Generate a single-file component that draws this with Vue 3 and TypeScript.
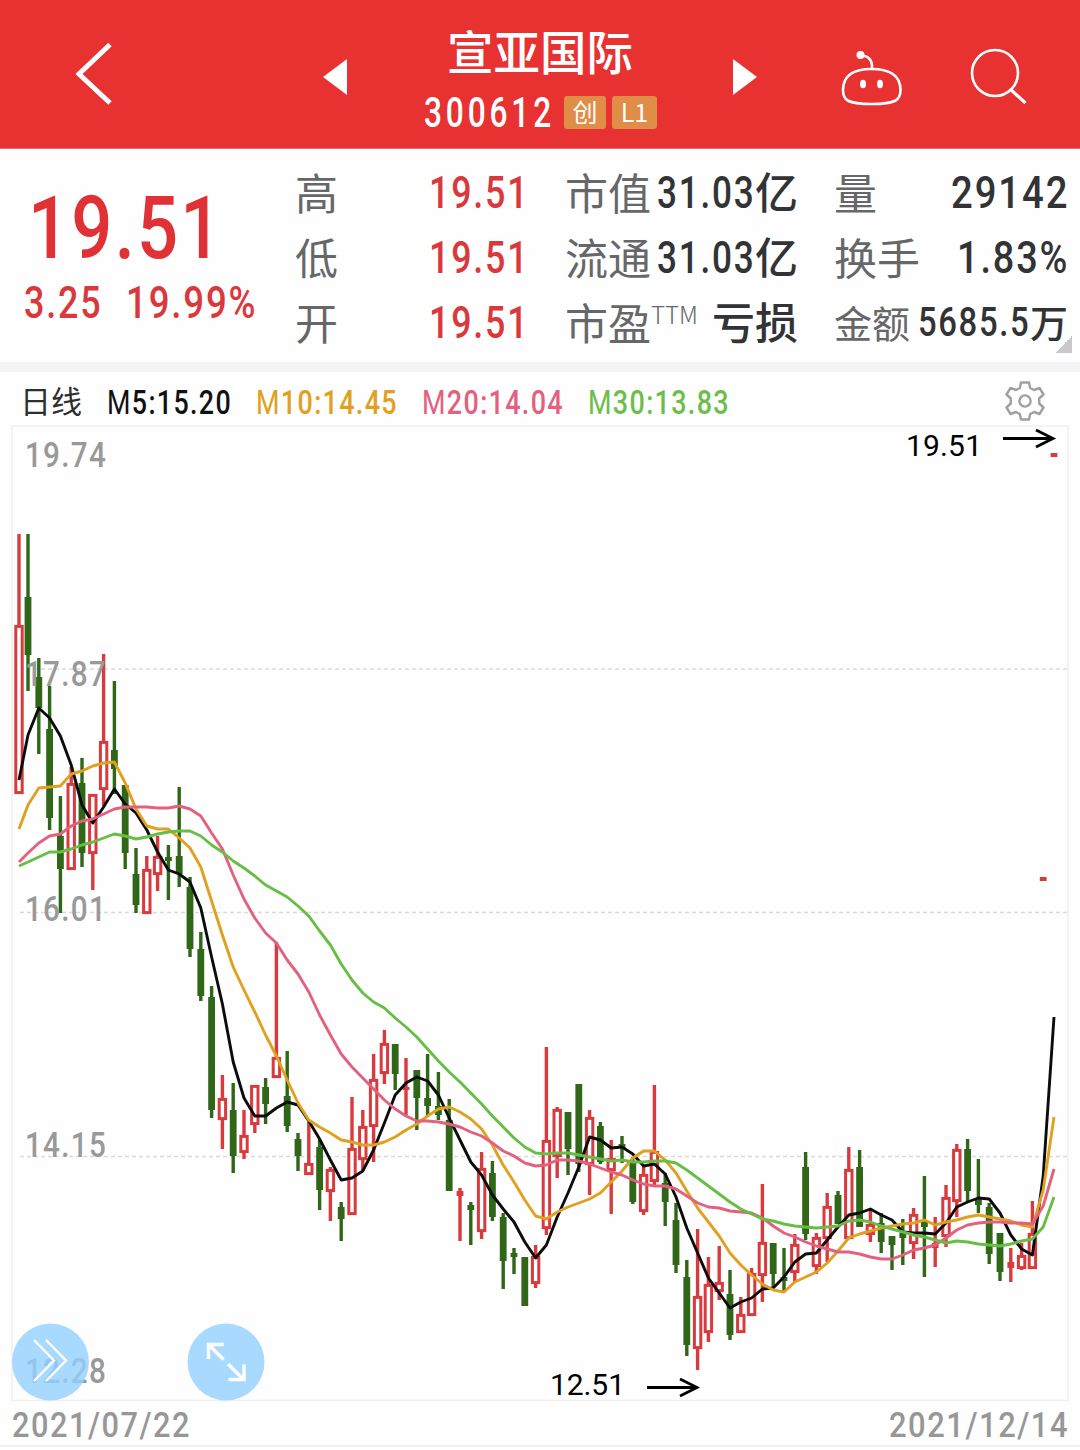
<script setup lang="ts">
import { h } from 'vue'

interface FitProps {
  text: string
  width: number
  size: number
  light?: string
  spacing?: number
}

/* Condensed numerals: the text is set to an exact width, the box is as tall as its capitals. */
const FitText = (props: FitProps) => {
  const height = Math.round(props.size * 0.711)
  const spacing = props.size * (props.spacing ?? 0.05)
  return h('svg', { class: 'fit', width: props.width, height, overflow: 'visible' }, [
    h(
      'text',
      {
        x: 0,
        y: height,
        fill: 'currentColor',
        'font-size': props.size,
        'letter-spacing': spacing,
        textLength: props.width + spacing * 0.6,
        lengthAdjust: 'spacingAndGlyphs',
      },
      [props.light ? h('tspan', { 'font-weight': 400 }, props.light) : null, props.text],
    ),
  ])
}
FitText.props = ['text', 'width', 'size', 'light', 'spacing']

const legend = [
  { light: 'M', text: '5:15.20', color: '#111113', width: 124 },
  { light: 'M', text: '10:14.45', color: '#e0a020', width: 141 },
  { light: 'M', text: '20:14.04', color: '#e4607e', width: 141 },
  { light: 'M', text: '30:13.83', color: '#6dbd4b', width: 141 },
]

const axis = [
  { text: '19.74', y: 467 },
  { text: '17.87', y: 685.5 },
  { text: '16.01', y: 920.5 },
  { text: '14.15', y: 1157 },
  { text: '12.28', y: 1383 },
]

type Candle = [kind: 'r' | 'g', high: number, top: number, bottom: number, low: number]

const candles: Candle[] = [
  ['r', 534, 625, 794, 794], ['g', 534, 597, 655, 691], ['g', 658, 677, 708, 754], ['g', 686, 729, 818, 830],
  ['g', 796, 836, 869, 913], ['r', 767, 783, 870, 870], ['g', 758, 783, 853, 867], ['r', 794, 794, 854, 890],
  ['r', 654, 741, 790, 806], ['g', 681, 750, 769, 794], ['g', 785, 785, 853, 869], ['g', 848, 874, 905, 913],
  ['r', 856, 869, 914, 914], ['r', 836, 856, 875, 891], ['g', 845, 857, 861, 900], ['g', 787, 856, 874, 887],
  ['g', 877, 887, 949, 957], ['g', 932, 949, 996, 1001], ['g', 986, 997, 1110, 1118], ['r', 1075, 1098, 1120, 1149],
  ['g', 1083, 1110, 1156, 1173], ['r', 1110, 1135, 1153, 1159], ['r', 1085, 1085, 1125, 1133], ['g', 1078, 1087, 1104, 1124],
  ['r', 942, 1057, 1078, 1078], ['g', 1051, 1096, 1126, 1132], ['g', 1133, 1139, 1156, 1171], ['r', 1122, 1163, 1175, 1175],
  ['g', 1140, 1147, 1190, 1210], ['r', 1167, 1169, 1192, 1221], ['g', 1202, 1207, 1219, 1241], ['r', 1097, 1148, 1215, 1215],
  ['r', 1110, 1126, 1160, 1170], ['r', 1054, 1079, 1127, 1162], ['r', 1030, 1043, 1074, 1084], ['g', 1044, 1044, 1074, 1090],
  ['r', 1058, 1087, 1090, 1115], ['g', 1070, 1070, 1098, 1130], ['g', 1054, 1098, 1106, 1116], ['g', 1072, 1106, 1115, 1120],
  ['g', 1099, 1120, 1191, 1191], ['r', 1188, 1191, 1196, 1241], ['g', 1202, 1205, 1210, 1245], ['r', 1152, 1168, 1232, 1239],
  ['g', 1161, 1173, 1217, 1221], ['g', 1213, 1217, 1261, 1289], ['g', 1248, 1253, 1257, 1274], ['g', 1257, 1257, 1306, 1306],
  ['r', 1245, 1256, 1284, 1288], ['r', 1047, 1140, 1229, 1235], ['r', 1107, 1109, 1157, 1178], ['g', 1112, 1112, 1149, 1175],
  ['g', 1084, 1084, 1164, 1172], ['r', 1110, 1117, 1165, 1195], ['g', 1122, 1126, 1162, 1164], ['r', 1140, 1158, 1171, 1214],
  ['g', 1136, 1144, 1148, 1163], ['g', 1157, 1162, 1202, 1204], ['r', 1167, 1174, 1212, 1215], ['r', 1085, 1151, 1182, 1185],
  ['g', 1173, 1183, 1202, 1226], ['g', 1203, 1220, 1265, 1273], ['g', 1260, 1277, 1345, 1356], ['r', 1229, 1296, 1349, 1370],
  ['r', 1257, 1284, 1333, 1342], ['r', 1246, 1282, 1292, 1300], ['g', 1270, 1294, 1335, 1340], ['r', 1297, 1314, 1333, 1333],
  ['r', 1268, 1273, 1316, 1316], ['r', 1184, 1242, 1276, 1302], ['g', 1243, 1243, 1274, 1287], ['g', 1248, 1277, 1281, 1292],
  ['r', 1234, 1244, 1273, 1282], ['g', 1152, 1167, 1234, 1240], ['r', 1233, 1237, 1267, 1274], ['r', 1193, 1206, 1239, 1262],
  ['g', 1191, 1195, 1224, 1224], ['r', 1147, 1169, 1239, 1239], ['g', 1150, 1167, 1227, 1227], ['r', 1211, 1224, 1235, 1242],
  ['g', 1213, 1223, 1242, 1253], ['g', 1236, 1236, 1245, 1270], ['g', 1219, 1233, 1238, 1265], ['r', 1208, 1214, 1244, 1259],
  ['g', 1176, 1222, 1227, 1277], ['r', 1217, 1243, 1248, 1267], ['r', 1185, 1197, 1237, 1247], ['r', 1144, 1149, 1202, 1217],
  ['g', 1139, 1149, 1191, 1201], ['g', 1159, 1199, 1205, 1213], ['g', 1203, 1207, 1254, 1264], ['g', 1233, 1233, 1272, 1281],
  ['r', 1248, 1262, 1268, 1282], ['r', 1243, 1255, 1269, 1270], ['r', 1201, 1233, 1269, 1269], ['r', 877, 877, 881, 881],
  ['r', 453, 453, 457, 457],
]

const averages = [
  {
    color: '#0c0c0c',
    values: [
      780, 735, 708, 718, 736, 765, 805, 823, 807, 789, 804, 813, 830, 852, 870, 874, 882, 908, 957, 1004, 1062, 1098, 1116,
      1116, 1108, 1102, 1105, 1121, 1139, 1160, 1180, 1178, 1171, 1150, 1123, 1095, 1083, 1077, 1081, 1095, 1118, 1140, 1162,
      1175, 1195, 1209, 1222, 1242, 1258, 1245, 1217, 1193, 1167, 1137, 1140, 1148, 1147, 1154, 1166, 1164, 1174, 1197, 1228,
      1253, 1278, 1293, 1308, 1302, 1298, 1289, 1288, 1277, 1262, 1254, 1253, 1240, 1227, 1215, 1213, 1209, 1215, 1220, 1232,
      1233, 1233, 1234, 1223, 1207, 1202, 1198, 1199, 1213, 1235, 1249, 1255, 1176, 1017,
    ],
  },
  {
    color: '#e0a020',
    values: [
      829, 805, 788, 787, 786, 774, 771, 766, 763, 762, 783, 809, 826, 829, 829, 838, 848, 867, 901, 935, 967, 990, 1012, 1035,
      1056, 1080, 1103, 1120, 1127, 1133, 1140, 1142, 1145, 1145, 1142, 1137, 1130, 1124, 1116, 1109, 1107, 1112, 1119, 1129,
      1145, 1165, 1182, 1200, 1216, 1219, 1212, 1207, 1203, 1199, 1193, 1182, 1171, 1158, 1151, 1151, 1160, 1173, 1191, 1208,
      1222, 1236, 1253, 1265, 1275, 1284, 1290, 1292, 1282, 1277, 1272, 1263, 1251, 1238, 1234, 1231, 1228, 1226, 1224, 1223,
      1220, 1225, 1222, 1220, 1217, 1215, 1217, 1219, 1221, 1225, 1227, 1190, 1117,
    ],
  },
  {
    color: '#e2617e',
    values: [
      862, 853, 843, 836, 834, 826, 821, 819, 814, 809, 807, 807, 807, 808, 808, 806, 809, 816, 833, 849, 875, 899, 918, 933,
      943, 960, 974, 992, 1015, 1035, 1054, 1067, 1078, 1089, 1100, 1109, 1116, 1121, 1121, 1122, 1124, 1127, 1132, 1136, 1143,
      1151, 1156, 1163, 1166, 1165, 1160, 1160, 1161, 1164, 1168, 1172, 1175, 1180, 1184, 1186, 1186, 1189, 1196, 1203, 1207,
      1208, 1211, 1212, 1213, 1218, 1226, 1233, 1237, 1242, 1246, 1249, 1252, 1252, 1254, 1257, 1259, 1259, 1255, 1250, 1248,
      1245, 1238, 1230, 1225, 1223, 1222, 1222, 1223, 1223, 1224, 1206, 1169,
    ],
  },
  {
    color: '#68bd45',
    values: [
      866, 862, 857, 852, 852, 849, 845, 842, 838, 834, 836, 839, 837, 834, 832, 831, 831, 836, 845, 852, 861, 868, 876, 885,
      891, 897, 906, 916, 931, 945, 964, 980, 993, 1002, 1008, 1018, 1027, 1037, 1049, 1061, 1072, 1082, 1093, 1104, 1116,
      1127, 1138, 1147, 1153, 1154, 1153, 1153, 1155, 1157, 1159, 1161, 1160, 1162, 1162, 1161, 1161, 1163, 1170, 1178, 1186,
      1194, 1202, 1209, 1214, 1219, 1221, 1224, 1226, 1227, 1228, 1227, 1226, 1221, 1220, 1222, 1226, 1229, 1232, 1235, 1237,
      1240, 1243, 1241, 1242, 1244, 1245, 1246, 1244, 1241, 1239, 1227, 1197,
    ],
  },
]

const xOf = (i: number): number => (i === 0 ? 19 : 28 + (i - 1) * 10.8)
const line = (values: number[]): string => values.map((v, i) => `${xOf(i).toFixed(1)},${v}`).join(' ')
const isHollow = (c: Candle): boolean => c[0] === 'r' && c[3] - c[2] > 6
</script>

<template>
  <main class="page">
    <header class="bar">
      <svg class="back" width="40" height="66" viewBox="0 0 40 66">
        <path d="M36 3.500L5 33L36 62" fill="none" stroke="#fff" stroke-width="5" />
      </svg>
      <svg class="prev" width="24" height="36" viewBox="0 0 24 36"><path d="M24 0V36L0 18Z" fill="#fff" /></svg>
      <div class="title">
        <h1>宣亚国际</h1>
        <div class="code">
          <FitText text="300612" :width="128" :size="42" :spacing="0.12" />
          <span class="badge">创</span>
          <span class="badge l1">L1</span>
        </div>
      </div>
      <svg class="next" width="24" height="36" viewBox="0 0 24 36"><path d="M0 0V36L24 18Z" fill="#fff" /></svg>
      <svg class="robot" width="64" height="58" viewBox="840 49 64 58">
        <g fill="none" stroke="#fff" stroke-width="2.600">
          <path d="M843 90C843 76 852 69 871.500 69C891 69 900.500 76 900.500 90C900.500 100 896 104 871.500 104C847 104 843 100 843 90Z" />
          <path d="M861 55.500C868 55.500 872.500 60 872 68" />
        </g>
        <circle cx="860.500" cy="55" r="4" fill="#fff" />
        <ellipse cx="863" cy="84" rx="3" ry="4.300" fill="#fff" />
        <ellipse cx="880" cy="84" rx="3" ry="4.300" fill="#fff" />
      </svg>
      <svg class="search" width="58" height="58" viewBox="969 47 58 58">
        <g fill="none" stroke="#fff" stroke-width="2.600">
          <circle cx="995" cy="73" r="23" />
          <path d="M1010 89L1025.500 103" stroke-width="3.200" />
        </g>
      </svg>
    </header>

    <section class="quote">
      <div class="price">
        <FitText class="last" text="19.51" :width="194" :size="88" :spacing="0.03" />
        <div class="delta">
          <FitText text="3.25" :width="77" :size="45" />
          <FitText text="19.99%" :width="130" :size="45" />
        </div>
      </div>
      <div class="col a">
        <div class="row"><span>高</span><FitText class="up" text="19.51" :width="99" :size="45" /></div>
        <div class="row"><span>低</span><FitText class="up" text="19.51" :width="99" :size="45" /></div>
        <div class="row"><span>开</span><FitText class="up" text="19.51" :width="99" :size="45" /></div>
      </div>
      <div class="col b">
        <div class="row"><span>市值</span><b><FitText text="31.03" :width="97" :size="45" /><em>亿</em></b></div>
        <div class="row"><span>流通</span><b><FitText text="31.03" :width="97" :size="45" /><em>亿</em></b></div>
        <div class="row"><span>市盈<sup>TTM</sup></span><b><em>亏损</em></b></div>
      </div>
      <div class="col c">
        <div class="row"><span>量</span><FitText class="num" text="29142" :width="117" :size="45" /></div>
        <div class="row"><span>换手</span><FitText class="num" text="1.83%" :width="111" :size="45" /></div>
        <div class="row small"><span>金额</span><b><FitText text="5685.5" :width="111" :size="41" /><em>万</em></b></div>
      </div>
      <i class="corner"></i>
    </section>

    <section class="legend">
      <span class="period">日线</span>
      <FitText v-for="m in legend" :key="m.text" :light="m.light" :text="m.text" :width="m.width" :size="33" :style="{ color: m.color }" />
      <svg class="gear" width="42" height="42" viewBox="-21 -21 42 42">
        <g fill="none" stroke="#a0a0a2" stroke-width="2.400" stroke-linejoin="round">
          <path d="M-4 -18.500H4L5.200 -13L9 -11L14.500 -13L18.500 -6.500L14.200 -2.500V2.500L18.500 6.500L14.500 13L9 11L5.200 13L4 18.500H-4L-5.200 13L-9 11L-14.500 13L-18.500 6.500L-14.200 2.500V-2.500L-18.500 -6.500L-14.500 -13L-9 -11L-5.200 -13Z" />
          <circle r="5.600" />
        </g>
      </svg>
    </section>

    <svg class="chart" width="1080" height="977" viewBox="0 425 1080 977">
      <path d="M12 426H1068V1400.500H12Z" fill="none" stroke="#f0f0f3" stroke-width="1.500" />
      <path d="M20 669H1068M20 912.500H1068M20 1156.500H1068" stroke="#dadada" stroke-width="1.500" stroke-dasharray="4 3" />
      <g v-for="(c, i) in candles" :key="i" :class="c[0]">
        <rect :x="xOf(i) - 1.700" :y="c[1]" width="3.400" :height="c[4] - c[1]" />
        <rect v-if="isHollow(c)" class="hollow" :x="xOf(i) - 3.200" :y="c[2] + 1.400" width="6.400" :height="c[3] - c[2] - 2.800" />
        <rect v-else :x="xOf(i) - 3.400" :y="c[2]" width="6.800" :height="c[3] - c[2]" />
      </g>
      <polyline v-for="m in averages" :key="m.color" :points="line(m.values)" fill="none" :stroke="m.color" stroke-width="2.900" stroke-linejoin="round" />
      <g class="axis">
        <text v-for="a in axis" :key="a.text" x="25" :y="a.y" textLength="82" lengthAdjust="spacingAndGlyphs">{{ a.text }}</text>
      </g>
      <g class="mark">
        <text x="906" y="455.500" textLength="76">19.51</text>
        <text x="550" y="1395" textLength="75">12.51</text>
        <path d="M1003 438.500H1052M1036 430L1053 438.500L1036 447" />
        <path d="M647 1387.500H696M680 1379L697 1387.500L680 1396" />
      </g>
      <g class="buttons">
        <circle cx="50.500" cy="1362" r="38.500" />
        <circle cx="226" cy="1362" r="38.500" />
        <path d="M34 1340L54 1360.500L34 1381M46 1340L66 1360.500L46 1381" stroke-width="2.400" />
        <path d="M223.500 1359.500L209 1345M208.500 1359V1344.500H223.500M228 1364L243 1379M244 1364.500V1379.500H228.500" stroke-width="3.400" />
      </g>
    </svg>

    <footer class="dates">
      <FitText text="2021/07/22" :width="178" :size="35" />
      <FitText text="2021/12/14" :width="179" :size="35" />
    </footer>
  </main>
</template>

<style>
body {
  margin: 0;
  background: #fefefe;
}
</style>

<style scoped>
.page {
  width: 1080px;
  height: 1450px;
  overflow: hidden;
  background: #fefefe;
  font-family: Roboto, 'Noto Sans CJK SC', sans-serif;
  font-weight: 500;
}
.fit {
  display: block;
  flex: none;
}
.bar {
  display: flex;
  align-items: flex-start;
  box-sizing: border-box;
  height: 149px;
  border-bottom: 1px solid #d9706c;
  background: #e83131;
  color: #fff;
}
.bar > svg {
  flex: none;
}
.back {
  margin: 41px 0 0 74px;
}
.prev {
  margin: 59px 0 0 209px;
}
.title {
  width: 386px;
}
h1 {
  margin: 19px 0 0;
  font: 500 46.500px/62px 'Noto Sans CJK SC', sans-serif;
  text-align: center;
}
.code {
  display: flex;
  align-items: center;
  height: 34px;
  margin: 14px 0 0 77px;
}
.badge {
  width: 42px;
  height: 33px;
  margin-left: 12px;
  border-radius: 3px;
  background: #e08d48;
  font: 400 25px/31px 'Noto Sans CJK SC', sans-serif;
  text-align: center;
}
.badge.l1 {
  width: 45px;
  margin-left: 6px;
}
.next {
  margin-top: 59px;
}
.robot {
  margin: 49px 0 0 83px;
}
.search {
  margin: 47px 0 0 65px;
}
.quote {
  display: flex;
  position: relative;
  box-sizing: border-box;
  height: 213px;
  padding-top: 11px;
}
.price {
  width: 295px;
  color: #e03136;
}
.last {
  margin: 35px 0 0 28px;
}
.delta {
  display: flex;
  gap: 25px;
  margin: 28px 0 0 24px;
  color: #d9383d;
}
.col {
  color: #666769;
  font: 400 43px/65px 'Noto Sans CJK SC', sans-serif;
}
.row {
  display: flex;
  align-items: center;
  justify-content: space-between;
  height: 65px;
}
.row .fit {
  margin-top: -2px;
  font-family: Roboto, sans-serif;
  font-weight: 500;
}
.row > span {
  margin-top: -2px;
  white-space: nowrap;
}
.row b {
  display: flex;
  align-items: center;
  height: 65px;
  color: #323335;
  font-weight: 500;
}
.row em {
  margin: -4px 0 0 1px;
  font-style: normal;
}
.a {
  width: 233px;
}
.b {
  width: 233px;
  margin-left: 37px;
}
.c {
  width: 234px;
  margin-left: 36px;
}
.small,
.small b {
  font-size: 38px;
}
.up {
  color: #d9383d;
}
.num {
  color: #323335;
}
sup {
  font-size: 24px;
  font-weight: 300;
  line-height: 0;
  vertical-align: 16px;
}
.corner {
  position: absolute;
  right: 8px;
  bottom: 9px;
  width: 17px;
  height: 17px;
  background: linear-gradient(135deg, transparent 50%, #c9c9cc 50%);
}
.legend {
  display: flex;
  align-items: center;
  box-sizing: border-box;
  height: 63px;
  padding: 4px 34px 0 22px;
  border-top: 10px solid #f4f4f7;
}
.legend .fit {
  margin: 3px 25px 0 0;
}
.period {
  margin: -1px 25px 0 -2px;
  color: #2d2e30;
  font: 400 31px/44px 'Noto Sans CJK SC', sans-serif;
}
.gear {
  margin-left: auto;
}
.chart {
  display: block;
}
.g {
  fill: #2f6617;
}
.r {
  fill: #d83a3e;
}
.hollow {
  fill: #fff;
  stroke: #d83a3e;
  stroke-width: 3px;
}
.axis {
  fill: #999;
  font-size: 35px;
  letter-spacing: 1.500px;
}
.mark {
  font-size: 30px;
  font-weight: 400;
}
.mark path {
  fill: none;
  stroke: #000;
  stroke-width: 2.800px;
}
.buttons circle {
  fill: #92d0ff;
  fill-opacity: 0.8;
}
.buttons path {
  fill: none;
  stroke: #fff;
}
.dates {
  display: flex;
  justify-content: space-between;
  box-sizing: border-box;
  height: 45px;
  padding: 10px 12px 0;
  border-bottom: 2px solid #eef2f6;
  color: #979797;
}
</style>
